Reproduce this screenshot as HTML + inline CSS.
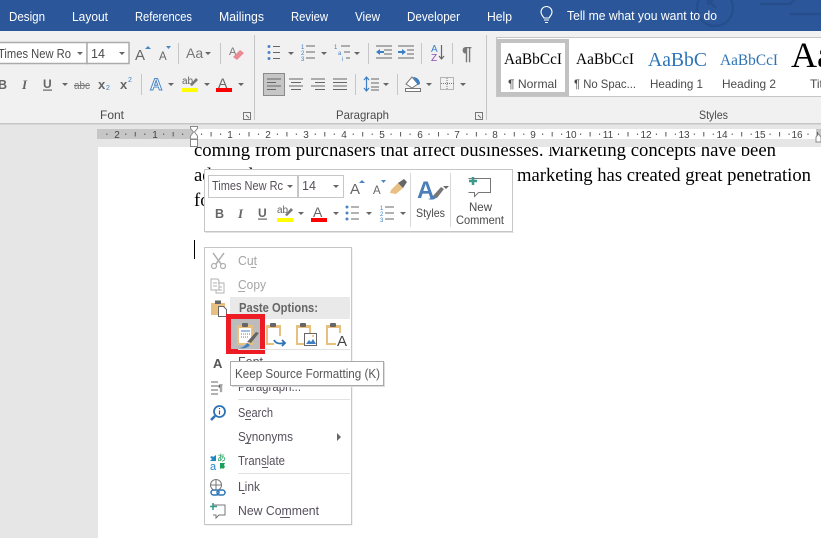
<!DOCTYPE html>
<html><head><meta charset="utf-8"><style>
html,body{margin:0;padding:0;background:#fff;width:821px;height:538px;overflow:hidden}
svg{display:block}
text{font-family:"Liberation Sans",sans-serif;font-size:12px;fill:#555}
.t{fill:#fff;font-size:13px}
.m{fill:#56505c;font-size:12.5px}
.d{fill:#a4a4a4;font-size:12.5px}
.s{fill:#000;font-family:"Liberation Serif",serif;font-size:18.67px}
.r{fill:#444;font-size:10px;text-anchor:middle}
.g{fill:#4a4a4a;font-size:12px}
.ic{font-weight:bold;fill:#666}
</style></head><body>
<svg width="821" height="538" viewBox="0 0 821 538" xmlns="http://www.w3.org/2000/svg">
<defs>
<pattern id="tk" x="192.1" y="129" width="37.9" height="10" patternUnits="userSpaceOnUse">
<rect x="9" y="4.5" width="1" height="1.5" fill="#555"/><rect x="18.5" y="3" width="1" height="4.5" fill="#555"/><rect x="28" y="4.5" width="1" height="1.5" fill="#555"/>
</pattern>
<clipPath id="pg"><rect x="98" y="147" width="723" height="391"/></clipPath>
<path id="ar" d="M0 0h6l-3 3z" fill="#666"/>
</defs>

<!-- title/tab bar -->
<rect width="821" height="31" fill="#2b579a"/>
<g fill="none" stroke="#264e8c" stroke-width="2.5">
<circle cx="715" cy="8" r="18"/><path d="M708 0l8 8M708 5v-5h6"/><path d="M760 4h30l8-8M790 14h31"/>
</g>
<text class="t" x="9" y="21" textLength="36" lengthAdjust="spacingAndGlyphs">Design</text>
<text class="t" x="72" y="21" textLength="36" lengthAdjust="spacingAndGlyphs">Layout</text>
<text class="t" x="135" y="21" textLength="57" lengthAdjust="spacingAndGlyphs">References</text>
<text class="t" x="219" y="21" textLength="45" lengthAdjust="spacingAndGlyphs">Mailings</text>
<text class="t" x="291" y="21" textLength="37" lengthAdjust="spacingAndGlyphs">Review</text>
<text class="t" x="355" y="21" textLength="25" lengthAdjust="spacingAndGlyphs">View</text>
<text class="t" x="407" y="21" textLength="53" lengthAdjust="spacingAndGlyphs">Developer</text>
<text class="t" x="487" y="21" textLength="25" lengthAdjust="spacingAndGlyphs">Help</text>
<path d="M544 18c-1-2-3-3-3-6a5.5 5.5 0 0 1 11 0c0 3-2 4-3 6zM544 20h5M545 22.500h3" fill="none" stroke="#fff" stroke-width="1.100"/>
<text class="t" x="567" y="20" textLength="150" lengthAdjust="spacingAndGlyphs">Tell me what you want to do</text>

<!-- ribbon -->
<rect y="31" width="821" height="92" fill="#f1f1f1"/>
<rect y="123" width="821" height="1.500" fill="#c6c6c6"/>
<rect y="124.500" width="821" height="23" fill="#e6e6e6"/>
<rect y="147" width="98" height="391" fill="#e6e6e6"/>
<rect x="254" y="35" width="1" height="85" fill="#c6c6c6"/>
<rect x="486" y="35" width="1" height="85" fill="#c6c6c6"/>

<!-- font combos -->
<rect x="-2" y="42.500" width="89" height="21" fill="#fff" stroke="#ababab" stroke-width="1.500"/>
<rect x="87" y="42.500" width="42" height="21" fill="#fff" stroke="#ababab" stroke-width="1.500"/>
<text x="-2" y="58" textLength="73" lengthAdjust="spacingAndGlyphs" style="font-size:12.5px;fill:#4a4a4a">Times New Ro</text>
<use href="#ar" x="77" y="52"/>
<text x="91" y="58" style="font-size:12.5px;fill:#4a4a4a">14</text>
<use href="#ar" x="119" y="52"/>
<text x="135" y="60" style="font-size:15px;fill:#666">A</text><path d="M145 49l3-3 3 3z" fill="#4a86c5"/>
<text x="159" y="60" style="font-size:11.500px;fill:#666">A</text><path d="M166 46h5l-2.500 3z" fill="#4a86c5"/>
<rect x="178" y="43" width="1" height="21" fill="#c6c6c6"/>
<text x="186" y="58" style="font-size:14px;fill:#777">Aa</text><use href="#ar" x="205" y="52"/>
<rect x="220" y="43" width="1" height="21" fill="#c6c6c6"/>
<text x="229" y="55" style="font-size:11px;fill:#777">A</text><path d="M233 57l7-7 4 3-7 7z" fill="#ea8b94"/>
<!-- row 2 -->
<text x="-2" y="89" class="ic" style="font-size:12.5px">B</text>
<text x="22" y="89" class="ic" style="font-size:13px;font-style:italic;font-family:'Liberation Serif',serif">I</text>
<text x="43" y="88" class="ic">U</text><rect x="43" y="89.500" width="9" height="1.200" fill="#666"/>
<use href="#ar" x="62" y="83"/>
<text x="74" y="89" textLength="16" lengthAdjust="spacingAndGlyphs" style="fill:#777;font-size:11px">abc</text><rect x="74" y="85" width="16" height="1" fill="#777"/>
<text x="98" y="89" class="ic" style="font-size:13px">x</text><text x="106" y="90" style="font-size:7px;fill:#3d7fc4">2</text>
<text x="120" y="89" class="ic" style="font-size:13px">x</text><text x="128" y="82" style="font-size:7px;fill:#3d7fc4">2</text>
<rect x="141" y="74" width="1" height="21" fill="#c6c6c6"/>
<text x="150" y="90" style="font-size:17px;font-weight:bold;fill:#fff;stroke:#4a86c5;stroke-width:1">A</text>
<use href="#ar" x="168" y="83"/>
<text x="182" y="84" style="font-size:10px;fill:#666">ab</text><path d="M190 85l6-7 2 2-6 6z" fill="#777"/><rect x="182" y="88" width="16" height="4" fill="#ff0"/>
<use href="#ar" x="204" y="83"/>
<text x="218" y="88" style="font-size:14px;fill:#666">A</text><rect x="216" y="88" width="16" height="4" fill="#f00"/>
<use href="#ar" x="238" y="83"/>
<text x="100" y="119" textLength="24" lengthAdjust="spacingAndGlyphs" class="g">Font</text>
<path d="M243.500 112.500h7v7h-7zM246 115l3 3" fill="none" stroke="#777"/>

<!-- paragraph -->
<g fill="#4a86c5"><circle cx="269" cy="46.500" r="1.500"/><circle cx="269" cy="52.500" r="1.500"/><circle cx="269" cy="58.500" r="1.500"/></g>
<path d="M273 46.500h7M273 52.500h7M273 58.500h7M306 46h9M306 52h9M306 58h9M341 46h9M344 52h6M346 58h4M376 46h16M384 50h8M384 54h8M376 58h16M398 46h16M407 50h7M407 54h7M398 58h16" stroke="#666" fill="none"/>
<text x="301" y="49" style="font-size:6px;fill:#3d7fc4">1</text><text x="301" y="55" style="font-size:6px;fill:#3d7fc4">2</text><text x="301" y="61" style="font-size:6px;fill:#3d7fc4">3</text>
<text x="334" y="49" style="font-size:6px;fill:#3d7fc4">1</text><text x="338" y="55" style="font-size:6px;fill:#3d7fc4">a</text><text x="342" y="61" style="font-size:6px;fill:#3d7fc4">i</text>
<use href="#ar" x="288" y="52"/><use href="#ar" x="321" y="52"/><use href="#ar" x="354" y="52"/>
<rect x="368" y="43" width="1" height="21" fill="#c6c6c6"/>
<path d="M376 52l4-3v2h4v2h-4v2z" fill="#3d7fc4"/><path d="M406 52l-4-3v2h-4v2h4v2z" fill="#3d7fc4"/>
<rect x="421" y="43" width="1" height="21" fill="#c6c6c6"/>
<text x="431" y="52" style="font-size:10px;fill:#3d7fc4">A</text><text x="431" y="61" style="font-size:10px;fill:#8a4fb0">Z</text>
<path d="M441.500 45v14M439 56l2.500 3 2.500-3" fill="none" stroke="#666" stroke-width="1.200"/>
<rect x="452" y="43" width="1" height="21" fill="#c6c6c6"/>
<text x="462" y="60" style="font-size:18px;font-weight:bold;fill:#777">¶</text>
<rect x="263.500" y="73.500" width="21" height="22" fill="#c6c6c6" stroke="#8a8a8a"/>
<path d="M267 79h14M267 82.500h9M267 86h14M267 89.500h9M289 79h14M291 82.500h10M289 86h14M291 89.500h10M311 79h14M315 82.500h10M311 86h14M315 89.500h10M333 79h14M333 82.500h14M333 86h14M333 89.500h14" stroke="#666" fill="none"/>
<rect x="355" y="74" width="1" height="21" fill="#c6c6c6"/>
<path d="M366.500 77v14" stroke="#3d7fc4" stroke-width="1.200"/><path d="M364 80l2.500-3 2.500 3M364 88l2.500 3 2.500-3" fill="none" stroke="#3d7fc4" stroke-width="1.200"/>
<path d="M371 79h8M371 83h8M371 87h8M371 90h8" stroke="#666"/>
<use href="#ar" x="383" y="83"/>
<rect x="397" y="74" width="1" height="21" fill="#c6c6c6"/>
<path d="M406 84l6-7 6 7-6 4z" fill="#fff" stroke="#777"/><path d="M413 77c4 0 7 3 7 7l-2 1z" fill="#3d7fc4"/><rect x="405.500" y="88.500" width="15" height="3" fill="#fff" stroke="#777"/>
<use href="#ar" x="426" y="83"/>
<rect x="440.500" y="77.500" width="13" height="12" fill="none" stroke="#777" stroke-dasharray="1 1"/><path d="M447 78v12M441 83.500h13" stroke="#777" stroke-dasharray="1 1"/>
<use href="#ar" x="460" y="83"/>
<text x="336" y="119" textLength="53" lengthAdjust="spacingAndGlyphs" class="g">Paragraph</text>
<path d="M475.500 112.500h7v7h-7zM478 115l3 3" fill="none" stroke="#777"/>

<!-- styles gallery -->
<rect x="496.500" y="37.500" width="330" height="59" fill="#fff" stroke="#c6c6c6"/>
<rect x="499" y="41" width="68" height="53" fill="#fff" stroke="#c2c2c2" stroke-width="4"/>
<text x="504" y="64" textLength="58" lengthAdjust="spacingAndGlyphs" style="font-family:'Liberation Serif',serif;font-size:15.500px;fill:#000">AaBbCcI</text>
<text x="508" y="88" textLength="49" lengthAdjust="spacingAndGlyphs" class="g">¶ Normal</text>
<text x="576" y="64" textLength="58" lengthAdjust="spacingAndGlyphs" style="font-family:'Liberation Serif',serif;font-size:15.500px;fill:#000">AaBbCcI</text>
<text x="574" y="88" textLength="62" lengthAdjust="spacingAndGlyphs" class="g">¶ No Spac...</text>
<text x="648" y="66" textLength="59" lengthAdjust="spacingAndGlyphs" style="font-family:'Liberation Serif',serif;font-size:20px;fill:#2e74b5">AaBbC</text>
<text x="650" y="88" textLength="53" lengthAdjust="spacingAndGlyphs" class="g">Heading 1</text>
<text x="720" y="65" textLength="58" lengthAdjust="spacingAndGlyphs" style="font-family:'Liberation Serif',serif;font-size:16px;fill:#2e74b5">AaBbCcI</text>
<text x="722" y="88" textLength="54" lengthAdjust="spacingAndGlyphs" class="g">Heading 2</text>
<text x="791" y="67" style="font-family:'Liberation Serif',serif;font-size:36px;fill:#000">Aa</text>
<text x="810" y="88" class="g">Titl</text>
<text x="699" y="119" textLength="29" lengthAdjust="spacingAndGlyphs" class="g">Styles</text>

<!-- ruler -->
<rect x="97" y="129" width="97" height="10" fill="#c6c6c6"/>
<rect x="194" y="129" width="622" height="10" fill="#fff"/>
<rect x="816" y="129" width="5" height="10" fill="#c6c6c6"/>
<rect x="97" y="129" width="724" height="10" fill="url(#tk)"/>
<rect x="97" y="129" width="3" height="10" fill="#c6c6c6"/>
<g>
<text class="r" x="117" y="138">2</text><text class="r" x="155" y="138">1</text>
<text class="r" x="230" y="138">1</text><text class="r" x="268" y="138">2</text><text class="r" x="306" y="138">3</text><text class="r" x="344" y="138">4</text><text class="r" x="382" y="138">5</text><text class="r" x="420" y="138">6</text><text class="r" x="457" y="138">7</text><text class="r" x="495" y="138">8</text><text class="r" x="533" y="138">9</text><text class="r" x="571" y="138">10</text><text class="r" x="608" y="138">11</text><text class="r" x="646" y="138">12</text><text class="r" x="684" y="138">13</text><text class="r" x="722" y="138">14</text><text class="r" x="760" y="138">15</text><text class="r" x="797" y="138">16</text>
</g>

<!-- page text -->
<g clip-path="url(#pg)">
<rect x="98" y="147" width="723" height="391" fill="#fff"/>
<text class="s" x="194" y="156" textLength="582" lengthAdjust="spacingAndGlyphs">coming from purchasers that affect businesses. Marketing concepts have been</text>
<text class="s" x="194" y="181">adopted</text>
<text class="s" x="517" y="181" textLength="294" lengthAdjust="spacingAndGlyphs">marketing has created great penetration</text>
<text class="s" x="194" y="206">for</text>
</g>
<path d="M190.500 126.500h7v2l-3 3.500 3 4v3h-7v-3l3-4-3-3.500zM190.500 139.500h7v7h-7z" fill="#fff" stroke="#8a8a8a"/>
<path d="M816 137l2.500-3 2.500 3v5h-5z" fill="#fff" stroke="#8a8a8a"/>
<rect x="194" y="240" width="1" height="19" fill="#000"/>

<!-- mini toolbar -->
<rect x="204.500" y="169.500" width="308" height="62" fill="#fff" stroke="#c6c6c6"/>
<rect x="205" y="232" width="309" height="1" fill="#e2e2e2"/>
<rect x="208.500" y="175.500" width="89" height="22" fill="#fff" stroke="#c6c6c6"/>
<rect x="298.500" y="175.500" width="45" height="22" fill="#fff" stroke="#c6c6c6"/>
<text x="212" y="190" textLength="71" lengthAdjust="spacingAndGlyphs" class="m">Times New Rc</text>
<use href="#ar" x="287" y="185"/>
<text x="302" y="190" class="m">14</text>
<use href="#ar" x="333" y="185"/>
<text x="350" y="194" style="font-size:15px;fill:#666">A</text><path d="M359 183l3-3 3 3z" fill="#4a86c5"/>
<text x="373" y="194" style="font-size:11.500px;fill:#666">A</text><path d="M381 180h5l-2.500 3z" fill="#4a86c5"/>
<path d="M391 190l7-7 5 5-7 6-6-1z" fill="#e9c083"/><path d="M398 183l6-4 3 3-4 6z" fill="#666"/>
<rect x="410" y="173" width="1" height="54" fill="#d8d8d8"/>
<text x="417" y="198" style="font-size:24px;font-weight:bold;fill:#4a7fb9">A</text>
<path d="M432 197l9-10 3 2-7 9z" fill="#777"/><path d="M428 199c2 0 4-2 5-3l3 2c-2 2-5 2-8 1z" fill="#4a7fb9"/>
<use href="#ar" x="443" y="186"/>
<text x="416" y="217" textLength="29" lengthAdjust="spacingAndGlyphs" class="g">Styles</text>
<rect x="450" y="173" width="1" height="54" fill="#d8d8d8"/>
<path d="M468.500 178.500h22v14h-12l-4 4v-4h-6" fill="#fff" stroke="#777"/>
<path d="M473 177v8M469 181h8" stroke="#3d9a8b" stroke-width="2.500"/>
<text x="469" y="211" textLength="23" lengthAdjust="spacingAndGlyphs" class="g">New</text>
<text x="456" y="224" textLength="48" lengthAdjust="spacingAndGlyphs" class="g">Comment</text>
<!-- mini row 2 -->
<text x="215" y="218" class="ic" style="font-size:12.500px">B</text>
<text x="238" y="218" class="ic" style="font-size:13px;font-style:italic;font-family:'Liberation Serif',serif">I</text>
<text x="258" y="217" class="ic">U</text><rect x="258" y="218.500" width="9" height="1.200" fill="#666"/>
<text x="277" y="213" style="font-size:10px;fill:#666">ab</text><path d="M285 215l6-7 2 2-6 6z" fill="#777"/><rect x="277" y="218" width="16" height="4" fill="#ff0"/>
<use href="#ar" x="298" y="212"/>
<text x="313" y="217" style="font-size:14px;fill:#666">A</text><rect x="311" y="218" width="16" height="4" fill="#f00"/>
<use href="#ar" x="333" y="212"/>
<g fill="#4a86c5"><circle cx="347" cy="207" r="1.500"/><circle cx="347" cy="213" r="1.500"/><circle cx="347" cy="219" r="1.500"/></g>
<path d="M351 207h8M351 213h8M351 219h8M385 207h9M385 213h9M385 219h9" stroke="#666"/>
<use href="#ar" x="366" y="212"/>
<text x="380" y="210" style="font-size:6px;fill:#3d7fc4">1</text><text x="380" y="216" style="font-size:6px;fill:#3d7fc4">2</text><text x="380" y="222" style="font-size:6px;fill:#3d7fc4">3</text>
<use href="#ar" x="400" y="212"/>

<!-- context menu -->
<rect x="205.500" y="248.500" width="147" height="277" fill="#e4e4e4"/>
<rect x="204.500" y="247.500" width="147" height="277" fill="#fff" stroke="#c6c6c6"/>
<!-- cut -->
<path d="M213 253l8 11M224 253l-8 11" stroke="#b0b0b0" stroke-width="1.500" fill="none"/><circle cx="214" cy="266" r="2.500" fill="none" stroke="#b0b0b0" stroke-width="1.300"/><circle cx="223" cy="266" r="2.500" fill="none" stroke="#b0b0b0" stroke-width="1.300"/>
<text class="d" x="238" y="265" textLength="19" lengthAdjust="spacingAndGlyphs">Cut</text><rect x="251" y="267" width="5" height="1" fill="#a8a8a8"/>
<!-- copy -->
<path d="M211 279h7l1 2v9h-8zM218 283h6v10h-8v-3" fill="#fff" stroke="#b0b0b0"/><path d="M213 283h4M213 286h4M219 287h3M219 290h3" stroke="#b0b0b0"/>
<text class="d" x="238" y="289" textLength="28" lengthAdjust="spacingAndGlyphs">Copy</text><rect x="238" y="291" width="7" height="1" fill="#a8a8a8"/>
<!-- paste main -->
<path d="M211 303h14v12h-14z" fill="#e7bf7e"/><path d="M215 300.500h6v3.500h-6z" fill="#666"/>
<path d="M218.500 306.500h5l3 3v7h-8z" fill="#fff" stroke="#666"/>
<rect x="230" y="297" width="120" height="22" fill="#e9e9e9"/>
<text x="239" y="312" textLength="79" lengthAdjust="spacingAndGlyphs" style="font-size:12.500px;font-weight:bold;fill:#666">Paste Options:</text>
<!-- paste buttons -->
<rect x="228.500" y="316.500" width="34" height="35" fill="#bcbcbc" stroke="#ed1c24" stroke-width="5"/>
<path d="M237 325h16v20h-16z" fill="#e7bf7e"/><rect x="239" y="328" width="12" height="15" fill="#fff"/><rect x="242" y="323" width="6" height="4" rx="1" fill="#666"/>
<path d="M241 331h9" stroke="#3d7fc4"/><path d="M241 334h9M241 337h7" stroke="#d9534f" stroke-dasharray="1 1"/>
<path d="M247 342l9-10 3 1-8 10z" fill="#666"/><path d="M239 348c3 0 6-2 8-5l3 2c-2 3-7 4-11 3z" fill="#3d7fc4"/>
<!-- keep text -->
<path d="M266 325h15v20h-15z" fill="#e7bf7e"/><rect x="268" y="328" width="11" height="15" fill="#fff"/><rect x="270" y="323" width="6" height="4" rx="1" fill="#666"/>
<rect x="274" y="336" width="8" height="10" fill="#fff"/>
<path d="M274 340c2 4 6 4 10 3M282 340l3 3-3 3" fill="none" stroke="#2e74b5" stroke-width="1.800"/>
<!-- picture -->
<path d="M296 325h15v20h-15z" fill="#e7bf7e"/><rect x="298" y="328" width="11" height="15" fill="#fff"/><rect x="300" y="323" width="6" height="4" rx="1" fill="#666"/>
<rect x="304.500" y="333.500" width="12" height="12" fill="#fff" stroke="#666"/><path d="M306 344l3-4 2 2 2-3 3 5z" fill="#3d7fc4"/><circle cx="313" cy="336" r="1" fill="#e7bf7e"/>
<!-- text only -->
<path d="M326 325h15v20h-15z" fill="#e7bf7e"/><rect x="328" y="328" width="11" height="15" fill="#fff"/><rect x="330" y="323" width="6" height="4" rx="1" fill="#666"/>
<rect x="336" y="333" width="13" height="14" fill="#fff"/>
<text x="337" y="346" style="font-size:15px;fill:#444">A</text>
<rect x="238" y="349" width="112" height="1" fill="#e2e2e2"/>
<!-- font -->
<text x="213" y="368" style="font-size:13px;font-weight:bold;fill:#555">A</text>
<text class="m" x="238" y="366">Font...</text>
<!-- paragraph -->
<path d="M211 382h7M211 386h7M211 390h7M211 394h7" stroke="#666"/><text x="218" y="391" style="font-size:9px;font-weight:bold;fill:#666">¶</text>
<text class="m" x="238" y="391" textLength="63" lengthAdjust="spacingAndGlyphs">Paragraph...</text>
<rect x="238" y="399" width="112" height="1" fill="#e2e2e2"/>
<!-- search -->
<circle cx="219.500" cy="411.500" r="5.500" fill="#fff" stroke="#2e74b5" stroke-width="1.800"/>
<path d="M215 416l-4 4" stroke="#2e74b5" stroke-width="2.500"/><path d="M219.500 408v1M219.500 410.500v4" stroke="#555" stroke-width="1.200"/>
<text class="m" x="238" y="417" textLength="35" lengthAdjust="spacingAndGlyphs">Search</text><rect x="245" y="419" width="6" height="1" fill="#5f5a66"/>
<text class="m" x="238" y="441" textLength="55" lengthAdjust="spacingAndGlyphs">Synonyms</text><rect x="245" y="443" width="6" height="1" fill="#5f5a66"/>
<path d="M337 433v8l4-4z" fill="#666"/>
<!-- translate -->
<path d="M216 455v6h-6l2-2-2-2 2-1 1 1z" fill="#1e88c7"/><path d="M220 469v-6h5l-1 2 1 2-2 2-1-1z" fill="#1f9e5b"/>
<text x="217" y="461" style="font-size:9px;fill:#1f9e5b;font-family:'Noto Sans CJK JP',sans-serif">あ</text>
<text x="210" y="470" style="font-size:11px;fill:#1e88c7">a</text>
<text class="m" x="238" y="465" textLength="47" lengthAdjust="spacingAndGlyphs">Translate</text><rect x="262" y="467" width="6" height="1" fill="#5f5a66"/>
<rect x="238" y="473" width="112" height="1" fill="#e2e2e2"/>
<!-- link -->
<circle cx="216" cy="485" r="5.500" fill="#fff" stroke="#777"/><path d="M210.500 485h11M216 479.500v11" stroke="#777"/>
<rect x="211" y="490" width="8" height="5" rx="2.500" fill="#fff" stroke="#2e74b5" stroke-width="1.500"/><rect x="217" y="490" width="8" height="5" rx="2.500" fill="none" stroke="#2e74b5" stroke-width="1.500"/>
<text class="m" x="238" y="491" textLength="22" lengthAdjust="spacingAndGlyphs">Link</text><rect x="242" y="493" width="3" height="1" fill="#5f5a66"/>
<!-- new comment -->
<path d="M213 505h12v10h-6l-3 3v-3h-3" fill="#fff" stroke="#777"/><path d="M213 503v7M210 506.500h7" stroke="#3d9a8b" stroke-width="1.600"/>
<text class="m" x="238" y="515" textLength="81" lengthAdjust="spacingAndGlyphs">New Comment</text><rect x="280" y="517" width="10" height="1" fill="#5f5a66"/>

<!-- tooltip -->
<rect x="232" y="362" width="153" height="25" fill="#dcdcdc"/>
<rect x="230.500" y="361.500" width="153" height="24" fill="#fff" stroke="#a9a9a9"/>
<text x="235" y="378" textLength="145" lengthAdjust="spacingAndGlyphs" style="font-size:12.500px;fill:#575757">Keep Source Formatting (K)</text>
</svg>
</body></html>
